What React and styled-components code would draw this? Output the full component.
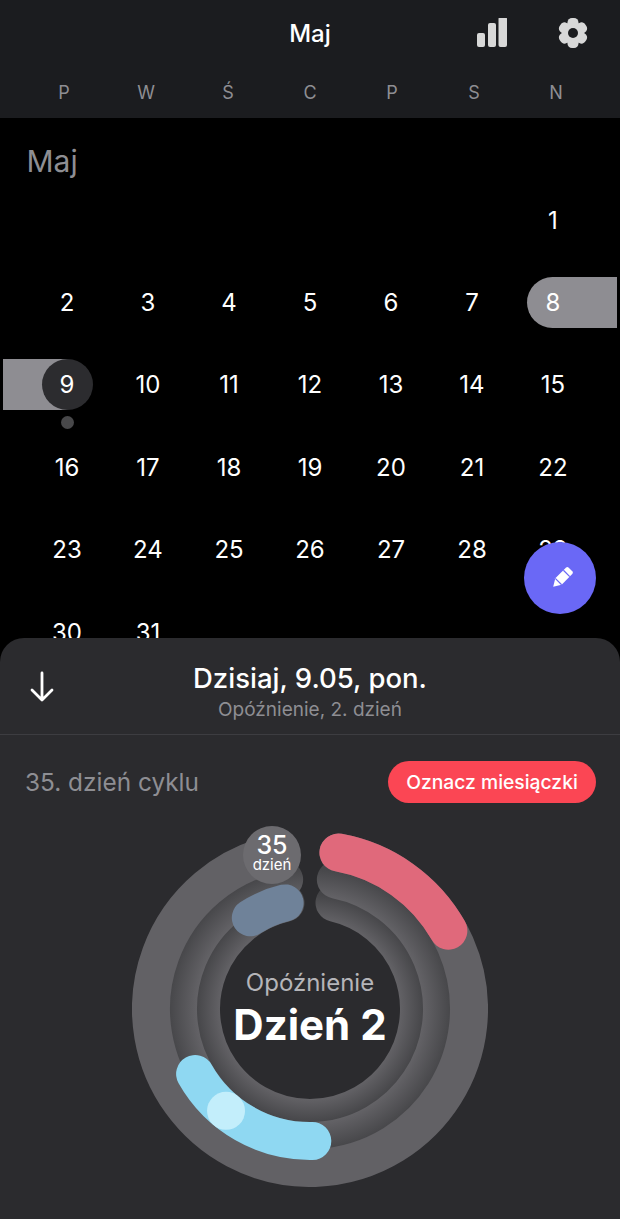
import React from "react";
import styled, { createGlobalStyle } from "styled-components";

const GlobalStyle = createGlobalStyle`
  html, body {
    margin: 0;
    padding: 0;
    background: #000;
  }
  * {
    box-sizing: border-box;
  }
`;

const Page = styled.div`
  width: 620px;
  height: 1219px;
  display: flex;
  flex-direction: column;
  overflow: hidden;
  position: relative;
  background: #000;
  color: #fff;
  font-family: Inter, "Liberation Sans", sans-serif;
`;

const Header = styled.header`
  height: 118px;
  flex: none;
  background: #1b1c1f;
`;

const TopBar = styled.div`
  height: 66px;
  display: grid;
  grid-template-columns: 1fr auto 1fr;
  align-items: center;
`;

const TopTitle = styled.div`
  grid-column: 2;
  font-size: 24px;
  font-weight: 500;
`;

const Actions = styled.div`
  grid-column: 3;
  justify-self: end;
  display: flex;
  align-items: center;
  gap: 51px;
  padding-right: 32px;
`;

const WeekRow = styled.div`
  height: 52px;
  padding: 0 23px;
  display: grid;
  grid-template-columns: repeat(7, 1fr);
  align-items: center;
  justify-items: center;
`;

const WeekDay = styled.span`
  font-size: 18px;
  color: #8e8e93;
`;

const Calendar = styled.section`
  flex: 1;
  min-height: 0;
  overflow: hidden;
  padding: 26px 26.5px 0;
`;

const MonthLabel = styled.div`
  height: 35px;
  line-height: 35px;
  font-size: 30px;
  color: #8e8e93;
`;

const DayGrid = styled.div`
  display: grid;
  grid-template-columns: repeat(7, 81px);
  grid-auto-rows: 82.4px;
  align-items: center;
  justify-items: center;
`;

const Cell = styled.div`
  grid-column: ${(props) => props.$col || "auto"};
  position: relative;
  width: 100%;
  height: 51px;
  display: flex;
  align-items: center;
  justify-content: center;
`;

const DayNumber = styled.span`
  position: relative;
  font-size: 24px;
  color: #fff;
`;

const RangeEnd = styled.div`
  position: absolute;
  top: 0;
  left: 14.5px;
  width: 90px;
  height: 51px;
  background: #8e8d92;
  border-radius: 25.5px 0 0 25.5px;
`;

const RangeStart = styled.div`
  position: absolute;
  top: 0;
  left: -24px;
  width: 64px;
  height: 51px;
  background: #8e8d92;
`;

const TodayCircle = styled.div`
  position: absolute;
  top: 0;
  left: 15px;
  width: 51px;
  height: 51px;
  border-radius: 50%;
  background: #2c2c2f;
`;

const TodayDot = styled.div`
  position: absolute;
  top: 57px;
  left: 34px;
  width: 13px;
  height: 13px;
  border-radius: 50%;
  background: #48484a;
`;

const Fab = styled.button`
  position: absolute;
  top: 542px;
  left: 524px;
  width: 72px;
  height: 72px;
  padding: 0;
  border: 0;
  border-radius: 50%;
  background: #6a68f6;
  display: flex;
  align-items: center;
  justify-content: center;
`;

const Sheet = styled.section`
  flex: none;
  height: 581px;
  position: relative;
  background: #2b2b2e;
  border-radius: 24px 24px 0 0;
`;

const SheetHeader = styled.div`
  height: 97px;
  display: grid;
  grid-template-columns: 84px 1fr 84px;
  align-items: center;
  border-bottom: 1px solid #3d3d41;
`;

const BackButton = styled.div`
  display: flex;
  justify-content: center;
  padding-top: 1px;
`;

const SheetHeading = styled.div`
  display: flex;
  flex-direction: column;
  align-items: center;
  padding-top: 13px;
`;

const SheetTitle = styled.div`
  font-size: 27.5px;
  line-height: 34px;
  font-weight: 500;
`;

const SheetSubtitle = styled.div`
  font-size: 19px;
  line-height: 30px;
  color: #8e8e93;
`;

const CycleRow = styled.div`
  padding: 26px 24px 0 25px;
  display: flex;
  align-items: center;
  justify-content: space-between;
`;

const CycleLabel = styled.div`
  font-size: 24.4px;
  color: #8e8e93;
`;

const MarkButton = styled.button`
  height: 42px;
  width: 208px;
  padding: 0;
  border: 0;
  border-radius: 21px;
  background: #fb4654;
  color: #fff;
  font-family: inherit;
  font-size: 19.3px;
  font-weight: 500;
`;

const RingWrap = styled.div`
  position: relative;
  width: 356px;
  height: 356px;
  margin: 28px auto 0;

  svg {
    display: block;
  }
`;

const DayBubble = styled.div`
  position: absolute;
  top: -5px;
  left: 111px;
  width: 58px;
  height: 58px;
  padding-bottom: 3px;
  border-radius: 50%;
  background: #6c6b6f;
  display: flex;
  flex-direction: column;
  align-items: center;
  justify-content: center;
`;

const BubbleNumber = styled.div`
  font-size: 25px;
  line-height: 21px;
  font-weight: 500;
`;

const BubbleLabel = styled.div`
  font-size: 15px;
  line-height: 17px;
`;

const RingCenter = styled.div`
  position: absolute;
  inset: 0;
  display: flex;
  flex-direction: column;
  align-items: center;
  justify-content: center;
`;

const DelayLabel = styled.div`
  font-size: 24px;
  line-height: 32px;
  color: #b5b5b9;
`;

const DelayValue = styled.div`
  font-size: 42px;
  line-height: 52px;
  font-weight: 700;
`;

const CX = 178;
const CY = 178;

const polar = (r, deg) => {
  const a = (deg * Math.PI) / 180;
  return [CX + r * Math.sin(a), CY - r * Math.cos(a)];
};

const arc = (r, from, to) => {
  const [x1, y1] = polar(r, from);
  const [x2, y2] = polar(r, to);
  const large = to - from > 180 ? 1 : 0;
  return `M${x1} ${y1}A${r} ${r} 0 ${large} 1 ${x2} ${y2}`;
};

const BarsIcon = () => (
  <svg width="30" height="30" viewBox="0 1 30 30" fill="#d8d8d8">
    <rect x="0" y="16" width="8" height="14" rx="2" />
    <rect x="11" y="6" width="8" height="24" rx="2" />
    <rect x="21.5" y="0" width="8.5" height="30" rx="2" />
  </svg>
);

const GearIcon = () => (
  <svg width="30" height="30" viewBox="0 0 30 30">
    <g fill="#d8d8d8">
      <circle cx="15" cy="15" r="11" />
      <rect x="9.5" y="0" width="11" height="30" rx="4.5" />
      <rect x="9.5" y="0" width="11" height="30" rx="4.5" transform="rotate(60 15 15)" />
      <rect x="9.5" y="0" width="11" height="30" rx="4.5" transform="rotate(120 15 15)" />
    </g>
    <circle cx="15" cy="15" r="5" fill="#1b1c1f" />
  </svg>
);

const PencilIcon = () => (
  <svg width="32" height="32" viewBox="-16 -16 32 32" style={{ marginLeft: 3 }}>
    <g transform="rotate(45)">
      <path d="M-4.5 -10a2 2 0 0 1 2-2h5a2 2 0 0 1 2 2V5L0 12.5L-4.5 5z" fill="#fff" />
      <path d="M-4.5 -6.5h9M-4.5 5h9" stroke="#6a68f6" strokeWidth="1.2" />
    </g>
  </svg>
);

const ArrowDown = () => (
  <svg width="26" height="32" viewBox="0 0 26 32" fill="none" stroke="#fff" strokeWidth="2.8" strokeLinecap="round" strokeLinejoin="round">
    <path d="M13 2v27M3 19l10 10 10-10" />
  </svg>
);

const CycleRing = () => (
  <svg width="356" height="356" viewBox="0 0 356 356" fill="none" strokeLinecap="round">
    <defs>
      <radialGradient id="middleShade" gradientUnits="userSpaceOnUse" cx={CX} cy={CY} r="151">
        <stop offset="0.75" stopColor="#636266" />
        <stop offset="0.93" stopColor="#47474a" />
      </radialGradient>
      <radialGradient id="innerShade" gradientUnits="userSpaceOnUse" cx={CX} cy={CY} r="128">
        <stop offset="0.7" stopColor="#636266" />
        <stop offset="0.9" stopColor="#444447" />
      </radialGradient>
    </defs>
    <path d={arc(109, 13, 347)} stroke="url(#innerShade)" strokeWidth="38" />
    <path d={arc(132, 11.3, 348.7)} stroke="url(#middleShade)" strokeWidth="38" />
    <path d={arc(159, 10.3, 346)} stroke="#626165" strokeWidth="38" />
    <path d={arc(159, 10.3, 60.5)} stroke="#e0697b" strokeWidth="38" />
    <path d={arc(132, 179, 240.5)} stroke="#8fd8f2" strokeWidth="38" />
    <path d={arc(109, 326.8, 346.8)} stroke="#6f8299" strokeWidth="37" />
    <circle cx={polar(132, 219.5)[0]} cy={polar(132, 219.5)[1]} r="19" fill="#c3eefb" />
  </svg>
);

const WEEK_DAYS = ["P", "W", "Ś", "C", "P", "S", "N"];
const DAYS = Array.from({ length: 31 }, (_, i) => i + 1);

const App = () => (
  <>
    <GlobalStyle />
    <Page>
      <Header>
        <TopBar>
          <TopTitle>Maj</TopTitle>
          <Actions>
            <BarsIcon />
            <GearIcon />
          </Actions>
        </TopBar>
        <WeekRow>
          {WEEK_DAYS.map((day, index) => (
            <WeekDay key={index}>{day}</WeekDay>
          ))}
        </WeekRow>
      </Header>
      <Calendar>
        <MonthLabel>Maj</MonthLabel>
        <DayGrid>
          {DAYS.map((day) => (
            <Cell key={day} $col={day === 1 ? 7 : undefined}>
              {day === 8 && <RangeEnd />}
              {day === 9 && (
                <>
                  <RangeStart />
                  <TodayCircle />
                  <TodayDot />
                </>
              )}
              <DayNumber>{day}</DayNumber>
            </Cell>
          ))}
        </DayGrid>
      </Calendar>
      <Fab>
        <PencilIcon />
      </Fab>
      <Sheet>
        <SheetHeader>
          <BackButton>
            <ArrowDown />
          </BackButton>
          <SheetHeading>
            <SheetTitle>Dzisiaj, 9.05, pon.</SheetTitle>
            <SheetSubtitle>Opóźnienie, 2. dzień</SheetSubtitle>
          </SheetHeading>
        </SheetHeader>
        <CycleRow>
          <CycleLabel>35. dzień cyklu</CycleLabel>
          <MarkButton>Oznacz miesiączki</MarkButton>
        </CycleRow>
        <RingWrap>
          <CycleRing />
          <RingCenter>
            <DelayLabel>Opóźnienie</DelayLabel>
            <DelayValue>Dzień 2</DelayValue>
          </RingCenter>
          <DayBubble>
            <BubbleNumber>35</BubbleNumber>
            <BubbleLabel>dzień</BubbleLabel>
          </DayBubble>
        </RingWrap>
      </Sheet>
    </Page>
  </>
);

export default App;
